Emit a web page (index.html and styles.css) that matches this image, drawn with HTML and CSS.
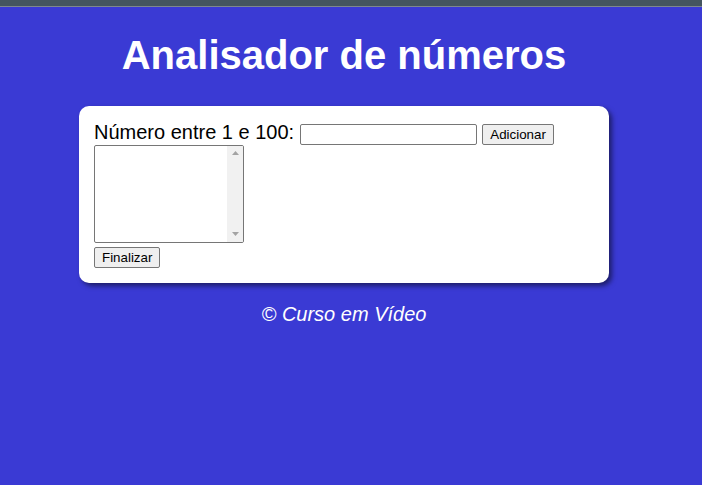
FILE: index.html
```html
<!DOCTYPE html>
<html lang="pt-BR">
<head>
<meta charset="utf-8">
<title>Analisador de números</title>
<link rel="stylesheet" href="styles.css">
</head>
<body>
<div class="topbar"></div>
<div class="page">
  <header class="header">
    <h1 class="title">Analisador de números</h1>
  </header>
  <section class="card">
    <div class="row">
      <label class="label" for="num">Número entre 1 e 100:</label>
      <input class="field" type="number" id="num">
      <button class="btn" type="button">Adicionar</button>
    </div>
    <div class="list" role="listbox">
      <div class="list-body"></div>
      <div class="scroll">
        <svg class="arrow" width="7" height="4" viewBox="0 0 7 4"><polygon points="0,4 3.5,0 7,4" fill="#a3a3a3"/></svg>
        <svg class="arrow" width="7" height="4" viewBox="0 0 7 4"><polygon points="0,0 7,0 3.5,4" fill="#a3a3a3"/></svg>
      </div>
    </div>
    <button class="btn" type="button">Finalizar</button>
  </section>
  <footer class="footer">
    <p class="credit">&copy; Curso em Vídeo</p>
  </footer>
</div>
</body>
</html>
```

FILE: styles.css
```css
html, body {
  margin: 0;
  padding: 0;
}

body {
  background: #3a3ad4;
  font-family: "Liberation Sans", Arial, sans-serif;
  min-height: 485px;
}

.topbar {
  height: 6px;
  background: #44555f;
  border-bottom: 1px solid #7e888d;
}

.page {
  padding-right: 14px;
}

.header {
  text-align: center;
}

.title {
  margin: 0;
  padding-top: 26px;
  font-size: 40px;
  line-height: 45px;
  font-weight: bold;
  color: #ffffff;
}

.card {
  width: 530px;
  box-sizing: border-box;
  margin: 28px auto 0;
  padding: 15px;
  background: #ffffff;
  border-radius: 10px;
  box-shadow: 3px 3px 5px rgba(0, 0, 0, 0.5);
}

.row {
  height: 24px;
  font-size: 20px;
  line-height: 23px;
  color: #000000;
}

.label {
  font-size: 20px;
}

.field {
  box-sizing: border-box;
  width: 177px;
  height: 21px;
  padding: 1px 2px;
  border: 1px solid #767676;
  border-radius: 2px;
  font: 13.333px "Liberation Sans", Arial, sans-serif;
  vertical-align: baseline;
  -moz-appearance: textfield;
}

.field::-webkit-inner-spin-button,
.field::-webkit-outer-spin-button {
  -webkit-appearance: none;
  margin: 0;
}

.btn {
  box-sizing: border-box;
  height: 21px;
  padding: 1px 7px;
  font: 13.333px "Liberation Sans", Arial, sans-serif;
  color: #000000;
  background: #efefef;
  border: 1px solid #767676;
  border-radius: 2px;
}

.list {
  display: flex;
  box-sizing: border-box;
  width: 150px;
  height: 98px;
  margin: 0 0 4px;
  border: 1px solid #767676;
  border-radius: 2px;
  background: #ffffff;
  overflow: hidden;
}

.list-body {
  flex: 1;
}

.scroll {
  width: 16px;
  background: #f1f1f1;
  display: flex;
  flex-direction: column;
  justify-content: space-between;
  align-items: center;
  padding: 5px 0 6px;
  box-sizing: border-box;
}

.arrow {
  display: block;
}

.footer {
  text-align: center;
}

.credit {
  margin: 20px 0 0;
  font-size: 20px;
  line-height: 23px;
  font-style: italic;
  color: #ffffff;
}
```
